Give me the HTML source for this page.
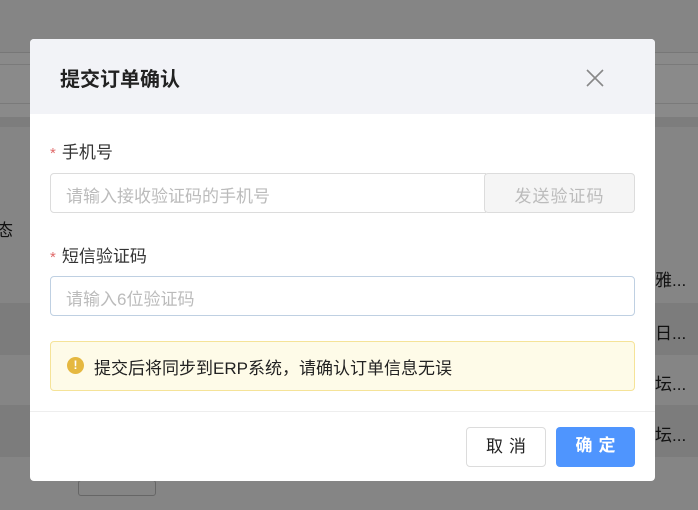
<!DOCTYPE html>
<html><head><meta charset="utf-8"><style>
*{box-sizing:border-box;margin:0;padding:0}
body{width:698px;height:510px;overflow:hidden;background:#858585;font-family:"Liberation Sans","Noto Sans CJK SC",sans-serif;position:relative}
.bg{position:absolute;left:0;width:698px}
.modal{position:absolute;left:30px;top:39px;width:625px;height:442px;background:#fff;border-radius:4px;overflow:hidden}
.hd{height:75px;background:#f2f3f7;position:relative}
.hd .t{position:absolute;left:30px;top:24px;font-size:20px;font-weight:bold;color:#222}
.x{position:absolute;left:556px;top:30px}
.lab{position:absolute;font-size:17px;color:#333}
.lab b{color:#e06a6a;font-weight:normal;font-size:15px;margin-right:6px}
.inp{position:absolute;left:20px;width:585px;height:40px;border:1px solid #dcdcdc;border-radius:4px;font-size:17px;color:#bbb;padding:8px 15px}
.btn{position:absolute;height:40px;border-radius:4px;font-size:17px;text-align:center;line-height:38px;letter-spacing:6px;text-indent:6px}
</style></head><body>
<div class="bg" style="top:52px;height:65px;background:#8a8a8a;border-top:1px solid #777"></div>
<div class="bg" style="top:64px;height:1px;background:#7a7a7a"></div>
<div class="bg" style="top:103px;height:1px;background:#7a7a7a"></div>
<div class="bg" style="top:117px;height:10px;background:#7d7d7d"></div>
<div class="bg" style="top:303px;height:52px;background:#7c7c7c"></div>
<div class="bg" style="top:405px;height:52px;background:#7c7c7c"></div>
<div style="position:absolute;left:-4px;top:216px;font-size:17px;color:#111">态</div>
<div style="position:absolute;left:655px;top:266px;font-size:17px;color:#111">雅...</div>
<div style="position:absolute;left:655px;top:319px;font-size:17px;color:#111">日...</div>
<div style="position:absolute;left:655px;top:370px;font-size:17px;color:#111">坛...</div>
<div style="position:absolute;left:655px;top:421px;font-size:17px;color:#111">坛...</div>
<div style="position:absolute;left:78px;top:480px;width:78px;height:16px;border:1px solid #666;border-radius:3px"></div>
<div class="modal">
<div class="hd"><div class="t">提交订单确认</div>
<svg class="x" width="18" height="18" viewBox="0 0 18 18"><path d="M1 1L17 17M17 1L1 17" stroke="#888" stroke-width="1.6"/></svg></div>
<div class="lab" style="left:20px;top:99px"><b>*</b>手机号</div>
<div class="inp" style="top:134px;width:436px;border-radius:4px 0 0 4px">请输入接收验证码的手机号</div>
<div class="inp" style="top:134px;left:454px;width:151px;background:#f5f5f5;text-align:center;padding:8px 0;letter-spacing:1px">发送验证码</div>
<div class="lab" style="left:20px;top:203px"><b>*</b>短信验证码</div>
<div class="inp" style="top:237px;border-color:#bfd0e2">请输入6位验证码</div>
<div style="position:absolute;left:20px;top:302px;width:585px;height:50px;background:#fefbe8;border:1px solid #f5e398;border-radius:4px">
<div style="position:absolute;left:16px;top:15px;width:17px;height:17px;border-radius:50%;background:#e5b840;color:#fff;font-size:12px;font-weight:bold;text-align:center;line-height:17px">!</div>
<div style="position:absolute;left:43px;top:12px;font-size:17px;color:#222">提交后将同步到ERP系统，请确认订单信息无误</div></div>
<div style="position:absolute;left:0;top:372px;width:625px;height:1px;background:#eee"></div>
<div class="btn" style="left:436px;top:388px;width:80px;border:1px solid #dcdcdc;color:#222">取消</div>
<div class="btn" style="left:526px;top:388px;width:79px;background:#4f95fe;color:#fff;font-weight:bold">确定</div>
</div>
</body></html>
